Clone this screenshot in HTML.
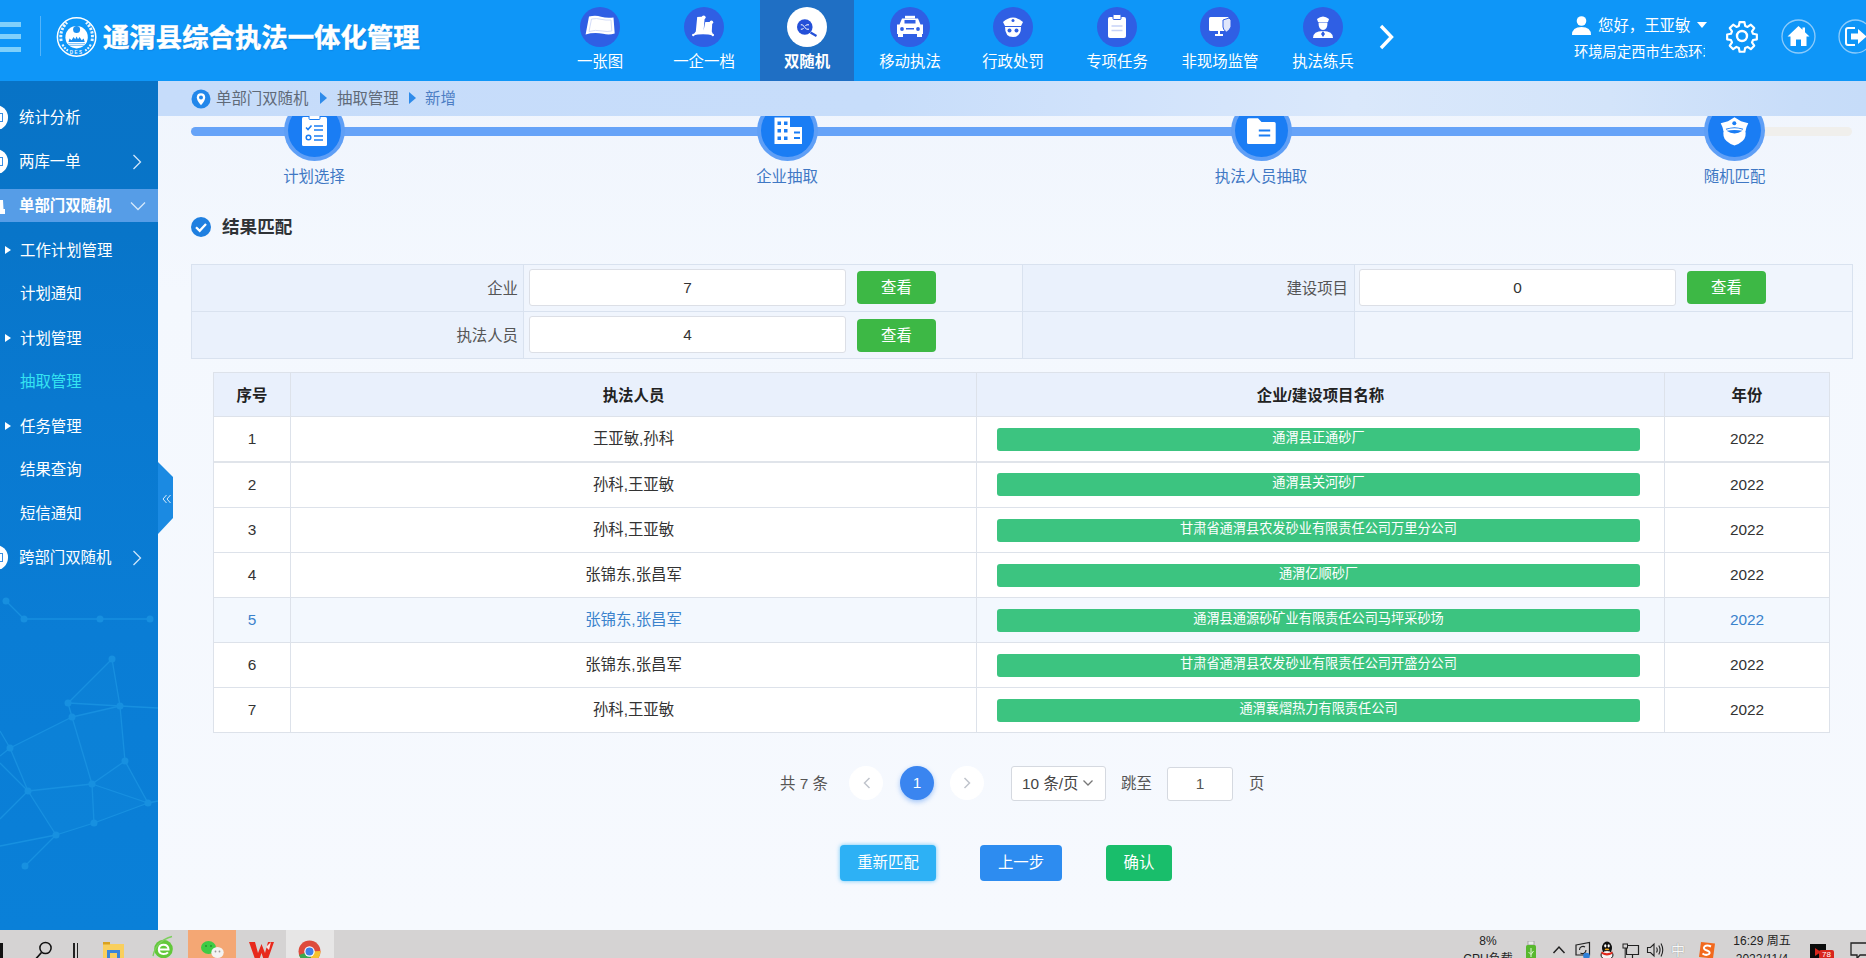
<!DOCTYPE html>
<html lang="zh-CN">
<head>
<meta charset="utf-8">
<title>通渭县综合执法一体化管理</title>
<style>
*{box-sizing:border-box;margin:0;padding:0}
html,body{width:1866px;height:958px;overflow:hidden;background:#f4f8fe}
body{font-family:"Liberation Sans","Noto Sans CJK SC",sans-serif;color:#333;position:relative;font-size:15.400px}
.abs{position:absolute}
/* header */
#hd{position:absolute;left:0;top:0;width:1866px;height:81px;background:#0e96f8;overflow:hidden}
#hd .bar{position:absolute;left:0;width:21px;height:5px;background:#7fd0fb}
#hd .vline{position:absolute;left:40px;top:16px;width:1px;height:40px;background:#53b4fa}
#title{position:absolute;left:103px;top:18px;-webkit-text-stroke:.5px #fff;font-size:26.400px;line-height:40px;font-weight:bold;color:#fff;white-space:nowrap;letter-spacing:0;text-shadow:1px 1px 1px rgba(0,60,140,.25)}
.nav{position:absolute;top:0;width:94px;height:81px;text-align:center;color:#fff}
.nav.on{background:#1f6fc4}
.nav .ic{position:absolute;left:27px;top:7px;width:40px;height:40px;border-radius:50%;background:#2f5fe4}
.nav.on .ic{background:#fff}
.nav .tx{position:absolute;left:-10px;right:-10px;top:51px;font-size:15.400px;line-height:22px;white-space:nowrap}
.nav.on .tx{font-weight:bold}
/* sidebar */
#sb{position:absolute;left:0;top:81px;width:158px;height:849px;background:linear-gradient(180deg,#0873c6 0%,#0875c9 18%,#0979d0 38%,#0a7dd5 65%,#0a80d8 100%);overflow:hidden;color:#fff}
#sb .it{position:absolute;left:0;width:158px;height:33px;line-height:33px;font-size:15.400px;white-space:nowrap}
#sb .it span{position:absolute;left:19px;top:0}
#sb .sub span{left:20px}
#sb .on{background:#569de7;font-weight:bold}
#sb .cur{color:#35e4f2}
#sb .dot{position:absolute;left:-17px;width:24.600px;height:24.600px;border-radius:50%;background:#fff;overflow:hidden}
#sb .dot i{position:absolute;left:16px;top:8px;width:4px;height:9px;border:1.300px solid #3a8fe4;border-left:none}
#sb .tri{position:absolute;left:5px;top:12px;width:0;height:0;border-left:6px solid #fff;border-top:4.5px solid transparent;border-bottom:4.5px solid transparent}
/* content */
#ct{position:absolute;left:158px;top:81px;width:1708px;height:849px;background:linear-gradient(180deg,#f0f5fd 0%,#f4f8fe 25%,#f6f9fe 100%);overflow:hidden}
#bc{position:absolute;left:158px;top:81px;width:1708px;height:35px;background:linear-gradient(90deg,#c6dcfa 0%,#c7ddfa 42%,#d0e2fb 55%,#dae8fb 70%,#d3e4fa 85%,#c8ddf9 96%,#c6dcf9 100%)}
#bc .t{position:absolute;top:8px;font-size:15.400px;line-height:20px;color:#5f6a78;white-space:nowrap}
.step{position:absolute;top:100px;width:61px;height:61px;border-radius:50%;background:#5f9ff6}
.step i{position:absolute;left:4px;top:4px;width:53px;height:53px;border-radius:50%;background:#1a7df4}
.stl{position:absolute;top:167px;width:160px;text-align:center;font-size:15.400px;line-height:20px;color:#3f78c4;white-space:nowrap}
/* form */
.fcell{position:absolute;border:1px solid #d9e2ef;background:#eaf1fc}
.flab{position:absolute;font-size:15.400px;line-height:20px;color:#555;text-align:right;white-space:nowrap}
.fin{position:absolute;height:37px;border:1px solid #dcdfe6;border-radius:3px;background:#fff;text-align:center;font-size:15.400px;line-height:35px;color:#333}
.fbtn{position:absolute;width:79px;height:33px;border-radius:4px;background:#3db845;color:#fff;text-align:center;font-size:15.400px;line-height:33px}
/* table */
#tb{position:absolute;left:213px;top:372px;width:1617px;height:361px;border:1px solid #dde2ea;background:#fff}
#tb .hd{position:absolute;left:0;top:0;width:1615px;height:44px;background:#e9f0fc;border-bottom:1px solid #dde2ea}
#tb .vl{position:absolute;top:0;width:1px;height:359px;background:#dde2ea}
#tb .hl{position:absolute;left:0;width:1615px;height:1px;background:#dde2ea}
#tb .c{position:absolute;text-align:center;font-size:15.400px;line-height:20px;color:#333;white-space:nowrap}
#tb .h{font-weight:bold;color:#222}
#tb .g{position:absolute;left:783px;width:643px;height:23px;border-radius:3px;background:#3cc480;color:#fff;font-size:13.200px;line-height:20px;text-align:center;white-space:nowrap}
#tb .hov{position:absolute;left:0;width:1615px;height:44px;background:#f3f8fe}
#tb .b{color:#3a82cc}
/* pager */
.pg{position:absolute;font-size:15.400px;line-height:20px;color:#555;white-space:nowrap}
.btn{position:absolute;top:845px;height:36px;border-radius:4px;color:#fff;font-size:15.400px;line-height:36px;text-align:center}
/* taskbar */
#tk{position:absolute;left:0;top:930px;width:1866px;height:28px;background:#d5d3d3;overflow:hidden}
</style>
</head>
<body>
<div id="ct"></div>
<div class="abs" style="left:191px;top:127px;width:1661px;height:9px;border-radius:5px;background:#f0efec"></div>
<div class="abs" style="left:191px;top:127px;width:1560px;height:9px;border-radius:5px 0 0 5px;background:#66a3f8"></div>
<div class="step" style="left:283.5px"><i></i><svg class="abs" style="left:0;top:0" width="61" height="61" viewBox="0 0 61 61"><rect x="18" y="17" width="25" height="29" rx="1.500" fill="#fff"/><rect x="25" y="14.500" width="11" height="5" rx="1" fill="#fff" stroke="#1a7df4" stroke-width="1"/><path d="M22 27.500 L24 29.500 L27.500 25.500" fill="none" stroke="#1a7df4" stroke-width="1.600"/><circle cx="24.500" cy="37.500" r="2.300" fill="none" stroke="#1a7df4" stroke-width="1.500"/><path d="M30 26 H39 M30 30 H39 M30 36 H39 M30 40 H39" stroke="#1a7df4" stroke-width="1.500"/></svg></div>
<div class="stl" style="left:234px">计划选择</div>
<div class="step" style="left:756.5px"><i></i><svg class="abs" style="left:0;top:0" width="61" height="61" viewBox="0 0 61 61"><path d="M17.500 17.500 H33 V27 H45 V44 H17.500 Z" fill="#fff"/><g fill="#1a7df4"><rect x="20.500" y="21.500" width="3.500" height="3.500"/><rect x="27" y="21.500" width="3.500" height="3.500"/><rect x="20.500" y="29" width="3.500" height="3.500"/><rect x="27" y="29" width="3.500" height="3.500"/><rect x="20.500" y="36.500" width="3.500" height="3.500"/><rect x="27" y="36.500" width="3.500" height="3.500"/><rect x="37" y="31.500" width="6" height="2"/><rect x="37" y="37" width="6" height="2"/></g></svg></div>
<div class="stl" style="left:707px">企业抽取</div>
<div class="step" style="left:1230.5px"><i></i><svg class="abs" style="left:0;top:0" width="61" height="61" viewBox="0 0 61 61"><path d="M16 19.700 Q16 18.200 17.500 18.200 H27 L30.500 22 H43.200 Q44.700 22 44.700 23.500 V42.500 Q44.700 44 43.200 44 H17.500 Q16 44 16 42.500 Z" fill="#fff"/><path d="M27.800 30.500 H39.200 M27.800 35.500 H39.200" stroke="#1a7df4" stroke-width="2.200"/></svg></div>
<div class="stl" style="left:1181px">执法人员抽取</div>
<div class="step" style="left:1704.0px"><i></i><svg class="abs" style="left:0;top:0" width="61" height="61" viewBox="0 0 61 61"><path d="M30.500 17.300 L37 21.300 L44.300 23.300 Q42 27.500 41.500 31 H19.500 Q19 27.500 16.700 23.300 L24 21.300 Z" fill="#fff"/><path d="M19.800 30 H41.200 Q43 37 38.500 41 Q34.500 44.500 30.500 45.600 Q26.500 44.500 22.500 41 Q18 37 19.800 30 Z" fill="#fff"/><path d="M22 29.300 Q30.500 26.300 39 29.300" fill="none" stroke="#1a7df4" stroke-width="1.100"/><path d="M22.500 30.800 Q30.500 29 38.500 30.800 Q30.500 36 22.500 30.800 Z" fill="#1a7df4"/><circle cx="30.300" cy="23.300" r="2" fill="#1a7df4"/></svg></div>
<div class="stl" style="left:1654.5px">随机匹配</div>
<svg class="abs" style="left:191px;top:217px" width="20" height="20" viewBox="0 0 20 20"><circle cx="10" cy="10" r="10" fill="#1f7fe0"/><path d="M5 10.200 L8.700 13.800 L15 7" fill="none" stroke="#fff" stroke-width="2.300"/></svg>
<div class="abs" style="left:222px;top:214px;font-size:17.600px;line-height:26px;font-weight:bold;color:#2f3236;white-space:nowrap">结果匹配</div>
<div class="fcell" style="left:191px;top:264px;width:333px;height:48px"></div>
<div class="fcell" style="left:523px;top:264px;width:500px;height:48px;background:#f0f5fd"></div>
<div class="fcell" style="left:1022px;top:264px;width:333px;height:48px"></div>
<div class="fcell" style="left:1354px;top:264px;width:499px;height:48px;background:#f0f5fd"></div>
<div class="fcell" style="left:191px;top:311px;width:333px;height:48px"></div>
<div class="fcell" style="left:523px;top:311px;width:500px;height:48px;background:#f0f5fd"></div>
<div class="fcell" style="left:1022px;top:311px;width:333px;height:48px"></div>
<div class="fcell" style="left:1354px;top:311px;width:499px;height:48px;background:#f0f5fd"></div>
<div class="flab" style="left:400px;top:279px;width:118px">企业</div>
<div class="flab" style="left:400px;top:326px;width:118px">执法人员</div>
<div class="flab" style="left:1230px;top:279px;width:118px">建设项目</div>
<div class="fin" style="left:529px;top:269px;width:317px">7</div><div class="fbtn" style="left:857px;top:271px">查看</div>
<div class="fin" style="left:529px;top:316px;width:317px">4</div><div class="fbtn" style="left:857px;top:319px">查看</div>
<div class="fin" style="left:1359px;top:269px;width:317px">0</div><div class="fbtn" style="left:1687px;top:271px">查看</div>
<div id="tb"><div class="hd"></div>
<div class="hov" style="top:225px;height:44px"></div>
<div class="hl" style="top:88px;height:2px;background:#e0e4ea"></div><div class="hl" style="top:134px"></div><div class="hl" style="top:179px"></div><div class="hl" style="top:224px"></div><div class="hl" style="top:269px"></div><div class="hl" style="top:314px"></div>
<div class="vl" style="left:76px"></div><div class="vl" style="left:762px"></div><div class="vl" style="left:1450px"></div>
<div class="c h" style="left:0px;top:13px;width:76px">序号</div><div class="c h" style="left:77px;top:13px;width:685px">执法人员</div><div class="c h" style="left:763px;top:13px;width:687px">企业/建设项目名称</div><div class="c h" style="left:1451px;top:13px;width:164px">年份</div>
<div class="c" style="left:0;top:56px;width:76px">1</div><div class="c" style="left:77px;top:56px;width:685px">王亚敏,孙科</div><div class="g" style="top:55px">通渭县正通砂厂</div><div class="c" style="left:1451px;top:56px;width:164px">2022</div>
<div class="c" style="left:0;top:102px;width:76px">2</div><div class="c" style="left:77px;top:102px;width:685px">孙科,王亚敏</div><div class="g" style="top:100px">通渭县关河砂厂</div><div class="c" style="left:1451px;top:102px;width:164px">2022</div>
<div class="c" style="left:0;top:147px;width:76px">3</div><div class="c" style="left:77px;top:147px;width:685px">孙科,王亚敏</div><div class="g" style="top:146px">甘肃省通渭县农发砂业有限责任公司万里分公司</div><div class="c" style="left:1451px;top:147px;width:164px">2022</div>
<div class="c" style="left:0;top:192px;width:76px">4</div><div class="c" style="left:77px;top:192px;width:685px">张锦东,张昌军</div><div class="g" style="top:191px">通渭亿顺砂厂</div><div class="c" style="left:1451px;top:192px;width:164px">2022</div>
<div class="c b" style="left:0;top:237px;width:76px">5</div><div class="c b" style="left:77px;top:237px;width:685px">张锦东,张昌军</div><div class="g" style="top:236px">通渭县通源砂矿业有限责任公司马坪采砂场</div><div class="c b" style="left:1451px;top:237px;width:164px">2022</div>
<div class="c" style="left:0;top:282px;width:76px">6</div><div class="c" style="left:77px;top:282px;width:685px">张锦东,张昌军</div><div class="g" style="top:281px">甘肃省通渭县农发砂业有限责任公司开盛分公司</div><div class="c" style="left:1451px;top:282px;width:164px">2022</div>
<div class="c" style="left:0;top:327px;width:76px">7</div><div class="c" style="left:77px;top:327px;width:685px">孙科,王亚敏</div><div class="g" style="top:326px">通渭襄熠热力有限责任公司</div><div class="c" style="left:1451px;top:327px;width:164px">2022</div>
</div>
<div class="pg" style="left:780px;top:774px">共 7 条</div>
<div class="abs" style="left:849px;top:766px;width:34px;height:34px;border-radius:50%;background:#fff"></div><svg class="abs" style="left:862px;top:776px" width="10" height="14" viewBox="0 0 10 14"><path d="M7.500 2 L2.500 7 L7.500 12" fill="none" stroke="#c0c4cc" stroke-width="1.500"/></svg>
<div class="abs" style="left:900px;top:766px;width:34px;height:34px;border-radius:50%;background:#3a85f0;box-shadow:0 2px 5px rgba(58,133,240,.45);color:#fff;text-align:center;font-size:15.400px;line-height:34px">1</div>
<div class="abs" style="left:950px;top:766px;width:34px;height:34px;border-radius:50%;background:#fff"></div><svg class="abs" style="left:962px;top:776px" width="10" height="14" viewBox="0 0 10 14"><path d="M2.500 2 L7.500 7 L2.500 12" fill="none" stroke="#c0c4cc" stroke-width="1.500"/></svg>
<div class="abs" style="left:1011px;top:766px;width:95px;height:35px;border:1px solid #d5d9e0;border-radius:3px;background:#fff"></div><div class="pg" style="left:1022px;top:774px;color:#444">10 条/页</div><svg class="abs" style="left:1082px;top:779px" width="12" height="8" viewBox="0 0 12 8"><path d="M1.500 1.500 L6 6 L10.500 1.500" fill="none" stroke="#777" stroke-width="1.300"/></svg>
<div class="pg" style="left:1121px;top:774px">跳至</div>
<div class="abs" style="left:1167px;top:767px;width:66px;height:34px;border:1px solid #d5d9e0;border-radius:3px;background:#fff;text-align:center;font-size:15.400px;line-height:32px;color:#555">1</div>
<div class="pg" style="left:1249px;top:774px">页</div>
<div class="btn" style="left:840px;width:96px;background:#2db1f5;box-shadow:0 0 4px rgba(45,177,245,.7)">重新匹配</div>
<div class="btn" style="left:980px;width:82px;background:#2d8cf0">上一步</div>
<div class="btn" style="left:1106px;width:66px;background:#19be6b">确认</div>
<svg class="abs" style="left:158px;top:462px" width="16" height="73" viewBox="0 0 16 73"><path d="M0 0 L15 15 V56 L0 72 Z" fill="#1b8ae2"/><path d="M8.500 33 L5 37 L8.500 41 M12.500 33 L9 37 L12.500 41" fill="none" stroke="#d6ebfb" stroke-width="1"/></svg>
<div id="sb">
<svg class="abs" style="left:0;top:420px" width="158" height="429" viewBox="0 0 158 429"><g stroke="#25a2ea" stroke-width="1.300" opacity=".5" fill="#25a2ea"><path d="M68 202 L112 158 L120 205 Z M72 216 L120 205 L125 260 L92 283 Z M92 283 L125 260 L148 302 Z M92 283 L148 302 L94 322 Z M10 247 L72 216 L92 283 L28 290 Z M28 290 L92 283 L94 322 L56 334 Z" stroke="none" opacity=".18"/><path d="M0 255 L10 247 M0 318 L28 290 M0 262 L28 290 M0 345 L56 334 M120 205 L158 207 M148 302 L158 300 M0 230 L10 247"/><line x1="6" y1="100" x2="24" y2="118"/><line x1="24" y1="118" x2="100" y2="118"/><line x1="100" y1="118" x2="150" y2="118"/><line x1="112" y1="158" x2="68" y2="202"/><line x1="68" y1="202" x2="72" y2="216"/><line x1="72" y1="216" x2="120" y2="205"/><line x1="112" y1="158" x2="120" y2="205"/><line x1="72" y1="216" x2="10" y2="247"/><line x1="72" y1="216" x2="92" y2="283"/><line x1="120" y1="205" x2="125" y2="260"/><line x1="125" y1="260" x2="92" y2="283"/><line x1="125" y1="260" x2="148" y2="302"/><line x1="92" y1="283" x2="148" y2="302"/><line x1="92" y1="283" x2="28" y2="290"/><line x1="10" y1="247" x2="28" y2="290"/><line x1="92" y1="283" x2="94" y2="322"/><line x1="94" y1="322" x2="56" y2="334"/><line x1="28" y1="290" x2="56" y2="334"/><line x1="94" y1="322" x2="148" y2="302"/><line x1="68" y1="202" x2="120" y2="205"/><line x1="56" y1="334" x2="25" y2="365"/><circle cx="6" cy="100" r="3.500" stroke="none"/><circle cx="24" cy="118" r="3.500" stroke="none"/><circle cx="100" cy="118" r="3.500" stroke="none"/><circle cx="150" cy="118" r="3.500" stroke="none"/><circle cx="112" cy="158" r="3.500" stroke="none"/><circle cx="68" cy="202" r="3.500" stroke="none"/><circle cx="72" cy="216" r="3.500" stroke="none"/><circle cx="120" cy="205" r="3.500" stroke="none"/><circle cx="10" cy="247" r="3.500" stroke="none"/><circle cx="125" cy="260" r="3.500" stroke="none"/><circle cx="92" cy="283" r="3.500" stroke="none"/><circle cx="28" cy="290" r="3.500" stroke="none"/><circle cx="148" cy="302" r="3.500" stroke="none"/><circle cx="94" cy="322" r="3.500" stroke="none"/><circle cx="56" cy="334" r="3.500" stroke="none"/><circle cx="25" cy="365" r="3.500" stroke="none"/></g></svg>
<div class="it" style="top:20px"><span>统计分析</span></div>
<div class="dot" style="top:24px"><i></i></div>
<div class="it" style="top:64px"><span>两库一单</span><svg class="abs" style="left:132px;top:9px" width="10" height="16" viewBox="0 0 10 16"><path d="M1.500 1 L8.500 8 L1.500 15" fill="none" stroke="#cfe6fa" stroke-width="1.300"/></svg></div>
<div class="dot" style="top:68px"><i></i></div>
<div class="it on" style="top:108px"><span>单部门双随机</span><svg class="abs" style="left:130px;top:12px" width="16" height="10" viewBox="0 0 16 10"><path d="M1 1.500 L8 8.500 L15 1.500" fill="none" stroke="#d5e8fb" stroke-width="1.300"/></svg></div>
<svg class="abs" style="left:0;top:118px" width="6" height="16" viewBox="0 0 6 16"><path d="M0 1 H3 L3.500 10 H5 V15 H0 Z" fill="#fff"/></svg>
<div class="it" style="top:460px"><span>跨部门双随机</span><svg class="abs" style="left:132px;top:9px" width="10" height="16" viewBox="0 0 10 16"><path d="M1.500 1 L8.500 8 L1.500 15" fill="none" stroke="#cfe6fa" stroke-width="1.300"/></svg></div>
<div class="dot" style="top:464px"><i></i></div>
<div class="it sub" style="top:153px"><i class="tri"></i><span>工作计划管理</span></div>
<div class="it sub" style="top:196px"><span>计划通知</span></div>
<div class="it sub" style="top:241px"><i class="tri"></i><span>计划管理</span></div>
<div class="it sub cur" style="top:284px"><span>抽取管理</span></div>
<div class="it sub" style="top:329px"><i class="tri"></i><span>任务管理</span></div>
<div class="it sub" style="top:372px"><span>结果查询</span></div>
<div class="it sub" style="top:416px"><span>短信通知</span></div>
</div>
<div id="hd">
<div class="bar" style="top:22px"></div><div class="bar" style="top:34px"></div><div class="bar" style="top:47px"></div>
<div class="vline"></div>
<svg class="abs" style="left:56px;top:16px" width="42" height="42" viewBox="0 0 42 42">
<circle cx="20.600" cy="21" r="19.200" fill="none" stroke="#fff" stroke-width="1.500"/>
<circle cx="20.600" cy="21.200" r="11.200" fill="#fff"/>
<circle cx="20.600" cy="13.600" r="3.500" fill="#1a8ef0"/>
<path d="M12.500 26 L13.500 22.500 L15.500 24.300 L17.600 21 L19.200 23.300 L20.600 20.600 L22 23.300 L23.600 21 L25.700 24.300 L27.700 22.500 L28.700 26 Z" fill="#1a8ef0"/>
<path d="M12.300 27.600 H28.900 M13 29.400 H28.200" stroke="#7cc0f7" stroke-width="1"/>
<path d="M5.200 25 Q3.200 14 11 6.500" fill="none" stroke="#e9f5ff" stroke-width="3" stroke-dasharray="2.400 1.300"/>
<path d="M36 25 Q38 14 30.200 6.500" fill="none" stroke="#e9f5ff" stroke-width="3" stroke-dasharray="2.400 1.300"/>
<path d="M6.500 28.500 Q8.500 32.500 12 34.500 M34.700 28.500 Q32.700 32.500 29.200 34.500" fill="none" stroke="#e9f5ff" stroke-width="2.200" stroke-dasharray="2 1.200"/>
<text x="20.600" y="37.600" text-anchor="middle" font-family="Liberation Sans,sans-serif" font-size="4.500" font-weight="bold" fill="#eaf5ff" letter-spacing="1.500">DES</text>
</svg>
<div id="title">通渭县综合执法一体化管理</div>
<div class="nav" style="left:553px"><div class="ic"><svg width="40" height="40" viewBox="0 0 40 40"><path d="M9 9.500 Q16 8 21 9.800 Q27 11.500 33.500 10.500 L34.700 26.500 Q29 28.500 23 26.800 Q14 25 5.600 27.500 Z" fill="#fff"/><path d="M11.500 12 Q17 11 21 12.300 Q26 13.500 31 13 L31.800 24 Q27 25 22.500 24 Q15 22.500 9 24.500 Z" fill="none" stroke="#cfd9f7" stroke-width=".9"/></svg></div><div class="tx">一张图</div></div>
<div class="nav" style="left:657px"><div class="ic"><svg width="40" height="40" viewBox="0 0 40 40"><path d="M8.600 28.600 L11.800 24.500 L13.200 10 L20.800 9.500 L19.600 23.500 L21.300 15 L28.300 15 L27.800 24.500 L29.500 28.600 Q19 25.800 8.600 28.600 Z" fill="#fff"/><circle cx="19.700" cy="10.300" r="1.900" fill="#fff"/><circle cx="27.400" cy="15.300" r="1.800" fill="#fff"/><circle cx="9.300" cy="28" r="1.200" fill="#fff"/><circle cx="28.800" cy="28" r="1.200" fill="#fff"/></svg></div><div class="tx">一企一档</div></div>
<div class="nav on" style="left:760px"><div class="ic"><svg width="40" height="40" viewBox="0 0 40 40"><circle cx="17.800" cy="20" r="7.800" fill="#2450d8"/><path d="M23.500 25.500 L29.500 29" stroke="#2450d8" stroke-width="2.200"/><path d="M13.800 17.800 H15.500 L19.500 22.200 H22 M13.800 22.200 H15.500 L16.500 21 M18.500 19 L19.500 17.800 H22" fill="none" stroke="#fff" stroke-width="1"/></svg></div><div class="tx">双随机</div></div>
<div class="nav" style="left:863px"><div class="ic"><svg width="40" height="40" viewBox="0 0 40 40"><path d="M12 11.500 H28 L30.500 17.500 H9.500 Z M7 17.500 H33 V27 H7 Z" fill="#fff"/><rect x="15" y="8.800" width="10" height="2.700" fill="#fff"/><rect x="14.500" y="13" width="11" height="3.500" fill="#2f5fe4"/><circle cx="12" cy="22" r="1.900" fill="#2f5fe4"/><circle cx="28" cy="22" r="1.900" fill="#2f5fe4"/><rect x="16" y="21" width="8" height="1.500" fill="#2f5fe4"/><rect x="8" y="27" width="5" height="3" fill="#fff"/><rect x="27" y="27" width="5" height="3" fill="#fff"/></svg></div><div class="tx">移动执法</div></div>
<div class="nav" style="left:966px"><div class="ic"><svg width="40" height="40" viewBox="0 0 40 40"><path d="M10 15 Q20 6 30 15 L28 19 H12 Z" fill="#fff"/><path d="M12 20 H28 Q28 30 20 30 Q12 30 12 20 Z" fill="#fff"/><circle cx="16.500" cy="23.500" r="2" fill="#2f5fe4"/><circle cx="23.500" cy="23.500" r="2" fill="#2f5fe4"/><circle cx="20" cy="13.500" r="1.500" fill="#2f5fe4"/></svg></div><div class="tx">行政处罚</div></div>
<div class="nav" style="left:1070px"><div class="ic"><svg width="40" height="40" viewBox="0 0 40 40"><rect x="11" y="10" width="18" height="21" rx="2" fill="#fff"/><rect x="16" y="7.500" width="8" height="5" rx="1" fill="#fff" stroke="#2f5fe4" stroke-width="1"/><path d="M14.500 19 H25.500 M14.500 23.500 H25.500" stroke="#c6d2f7" stroke-width="1.500"/></svg></div><div class="tx">专项任务</div></div>
<div class="nav" style="left:1173px"><div class="ic"><svg width="40" height="40" viewBox="0 0 40 40"><rect x="9" y="10" width="20" height="14" rx="1.500" fill="#fff"/><path d="M15 28 H23 M19 24 V28" stroke="#fff" stroke-width="2"/><path d="M23 13 L29 11 L31 13 V20 Q29 24 26.500 25 Q23 23 23 20 Z" fill="#dfe6fb" stroke="#2f5fe4" stroke-width="1"/></svg></div><div class="tx">非现场监管</div></div>
<div class="nav" style="left:1276px"><div class="ic"><svg width="40" height="40" viewBox="0 0 40 40"><path d="M14 12 Q20 7 26 12 L25 15 H15 Z" fill="#fff"/><path d="M15.500 15.500 H24.500 Q24.500 23 20 23 Q15.500 23 15.500 15.500 Z" fill="#fff"/><path d="M10 31 Q10 24 20 24 Q30 24 30 31 Z" fill="#fff"/><path d="M20 24 L18 27 L20 30 L22 27 Z" fill="#2f5fe4"/></svg></div><div class="tx">执法练兵</div></div>

<svg class="abs" style="left:1378px;top:24px" width="18" height="26" viewBox="0 0 18 26"><path d="M3 2 L13.500 13 L3 24" fill="none" stroke="#fff" stroke-width="3.400"/></svg>
<svg class="abs" style="left:1571px;top:15px" width="21" height="21" viewBox="0 0 21 21"><circle cx="10.500" cy="6" r="4.800" fill="#fff"/><path d="M1 20 Q1 12 10.500 12 Q20 12 20 20 Z" fill="#fff"/></svg>
<div class="abs" style="left:1598px;top:15px;font-size:15.400px;line-height:22px;color:#fff;white-space:nowrap">您好，王亚敏</div>
<div class="abs" style="left:1696.500px;top:22px;width:0;height:0;border-top:6px solid #fff;border-left:5.500px solid transparent;border-right:5.500px solid transparent"></div>
<div class="abs" style="left:1574px;top:40.500px;width:131px;overflow:hidden;font-size:14.300px;line-height:22px;color:#fff;white-space:nowrap">环境局定西市生态环境局</div>
<svg class="abs" style="left:1723.500px;top:17.700px" width="36" height="36" viewBox="0 0 36 36"><g fill="none" stroke="#fff" stroke-width="2.400" stroke-linejoin="round"><path d="M15.300 2.500h5.400l.8 4.300 2.700 1.100 3.600-2.500 3.800 3.800-2.500 3.600 1.100 2.700 4.300.8v5.400l-4.300.8-1.100 2.700 2.500 3.600-3.800 3.800-3.600-2.500-2.700 1.100-.8 4.300h-5.400l-.8-4.300-2.700-1.100-3.600 2.500-3.800-3.800 2.500-3.600-1.100-2.700-4.300-.8v-5.400l4.300-.8 1.100-2.700-2.500-3.600 3.800-3.800 3.600 2.500 2.700-1.100z" transform="translate(1.800 1.800) scale(0.900)"/><circle cx="18" cy="18" r="5"/></g></svg>
<svg class="abs" style="left:1781px;top:19px" width="36" height="36" viewBox="0 0 36 36"><circle cx="17.500" cy="17.500" r="16.500" fill="none" stroke="#8ccbfb" stroke-width="1.300"/><path d="M17.500 7 L6.500 17.500 H9.500 V27 H15 V20.500 H20 V27 H25.500 V17.500 H28.500 L24 13.200 V8.500 H21.500 V10.800 Z" fill="#fff"/></svg>
<svg class="abs" style="left:1838px;top:19px" width="36" height="36" viewBox="0 0 36 36"><circle cx="17.500" cy="17.500" r="16.500" fill="none" stroke="#8ccbfb" stroke-width="1.300"/><path d="M17 9 H10 Q8 9 8 11 V24 Q8 26 10 26 H17" fill="none" stroke="#fff" stroke-width="2"/><path d="M13 14.500 H20 V10 L28.500 17.500 L20 25 V20.500 H13 Z" fill="#fff"/></svg>
</div>
<div id="bc">
<svg class="abs" style="left:33px;top:8px" width="20" height="20" viewBox="0 0 20 20"><circle cx="10" cy="10" r="9.500" fill="#2287ea"/><path d="M10 4.200 Q5.800 4.200 5.800 8.500 Q5.800 11.500 10 16.200 Q14.200 11.500 14.200 8.500 Q14.200 4.200 10 4.200 Z" fill="#fff"/><circle cx="10" cy="8.500" r="2" fill="#2287ea"/></svg>
<div class="t" style="left:58px">单部门双随机</div>
<div class="abs" style="left:162px;top:11px;width:0;height:0;border-left:7px solid #2e8bea;border-top:6px solid transparent;border-bottom:6px solid transparent"></div>
<div class="t" style="left:179px">抽取管理</div>
<div class="abs" style="left:251px;top:11px;width:0;height:0;border-left:7px solid #2e8bea;border-top:6px solid transparent;border-bottom:6px solid transparent"></div>
<div class="t" style="left:267px;color:#4c7ec4">新增</div>
</div>
<div id="tk">
<div class="abs" style="left:188px;top:0;width:48px;height:28px;background:#f4a774"></div>
<div class="abs" style="left:286px;top:0;width:48px;height:28px;background:#e7e6e6"></div>
<div class="abs" style="left:0;top:13px;width:3px;height:15px;background:#111"></div>
<svg class="abs" style="left:30px;top:10px" width="26" height="20" viewBox="0 0 26 20"><circle cx="15.500" cy="8" r="5.600" fill="none" stroke="#111" stroke-width="1.500"/><path d="M11.500 12.500 L4 21" stroke="#111" stroke-width="1.700"/></svg>
<div class="abs" style="left:73px;top:13px;width:1.500px;height:15px;background:#222"></div><div class="abs" style="left:76.500px;top:13px;width:1.500px;height:15px;background:#222"></div>
<svg class="abs" style="left:102px;top:11px" width="24" height="18" viewBox="0 0 24 18"><path d="M1 1 H8 V3 H22 V18 H1 Z" fill="#f9cf5d"/><rect x="1" y="1" width="7" height="2.500" fill="#d9a11f"/><rect x="5" y="9" width="13" height="9" fill="#3a86d9"/><rect x="8" y="12" width="7" height="6" fill="#f9cf5d"/></svg>
<svg class="abs" style="left:150px;top:2px" width="28" height="26" viewBox="0 0 28 26"><circle cx="13.500" cy="17" r="9.300" fill="#62c83a"/><path d="M8.800 17.500 H18.500 Q18.300 12.800 13.500 12.800 Q9 12.800 8.800 17.500 Q9 22 13.500 22 Q16.500 22 18 20.300" fill="none" stroke="#fff" stroke-width="2"/><path d="M3 24 Q6 9 22 4.500" fill="none" stroke="#7ccf5c" stroke-width="1.300"/></svg>
<svg class="abs" style="left:199px;top:9px" width="30" height="20" viewBox="0 0 30 20"><ellipse cx="9.500" cy="8.500" rx="7.500" ry="6.500" fill="#3ecb45"/><ellipse cx="18.500" cy="13.500" rx="6.200" ry="5.500" fill="#f3f3f3"/><circle cx="7" cy="7" r="1" fill="#2a8f31"/><circle cx="12" cy="7" r="1" fill="#2a8f31"/><circle cx="16.500" cy="12.500" r=".9" fill="#999"/><circle cx="20.500" cy="12.500" r=".9" fill="#999"/></svg>
<svg class="abs" style="left:248px;top:11px" width="28" height="18" viewBox="0 0 28 18"><path d="M1 1 H7 L10 12 L13.500 3 L17 12 L20 1 H26 L20 18 H15.500 L13.500 12 L11.500 18 H7 Z" fill="#e8291c"/><path d="M18 6 L23 1 L21 9 Z" fill="#fff" opacity=".85"/></svg>
<svg class="abs" style="left:297px;top:7px" width="26" height="24" viewBox="0 0 26 20"><circle cx="12.500" cy="12.500" r="11" fill="#de4b3c"/><path d="M12.500 12.500 L2 16 A11 11 0 0 0 15 23.200 Z" fill="#39a853"/><path d="M12.500 12.500 L23.500 12 A11 11 0 0 1 15 23.200 Z" fill="#f6c22d"/><circle cx="12.500" cy="12.500" r="5.200" fill="#fff"/><circle cx="12.500" cy="12.500" r="4" fill="#3f7fe8"/></svg>
<div class="abs" style="left:1460px;top:4px;width:56px;text-align:center;font-size:12px;line-height:14px;color:#222">8%</div>
<div class="abs" style="left:1454px;top:21.500px;width:68px;text-align:center;font-size:12px;line-height:14px;color:#222;white-space:nowrap">CPU负载</div>
<svg class="abs" style="left:1525px;top:11px" width="12" height="18" viewBox="0 0 12 18"><rect x="3" y="0" width="6" height="4" fill="#e9e9e9" stroke="#888" stroke-width=".6"/><rect x="1" y="4" width="10" height="14" rx="1.500" fill="#58b82e"/><path d="M6 7 V16 M3.500 11 L6 13.500 L8.500 10" fill="none" stroke="#dff5d5" stroke-width="1"/></svg>
<svg class="abs" style="left:1552px;top:15px" width="14" height="9" viewBox="0 0 14 9"><path d="M1.500 8 L7 2 L12.500 8" fill="none" stroke="#222" stroke-width="1.500"/></svg>
<svg class="abs" style="left:1574px;top:11px" width="20" height="18" viewBox="0 0 20 18"><path d="M2 4 L15.500 1.500 V14 L2 14 Z" fill="none" stroke="#222" stroke-width="1.200"/><path d="M5.500 9 A3.500 3.500 0 0 1 11 6 M12 9 A3.500 3.500 0 0 1 6.500 12" fill="none" stroke="#222" stroke-width="1.100"/><circle cx="12.500" cy="15" r="3.300" fill="#2f7fd8"/></svg>
<svg class="abs" style="left:1599px;top:10px" width="16" height="19" viewBox="0 0 16 19"><ellipse cx="8" cy="8" rx="5" ry="6.500" fill="#111"/><ellipse cx="8" cy="15" rx="6" ry="4.500" fill="#f3f3f3" stroke="#111" stroke-width="1"/><path d="M2.500 11.500 Q8 15 13.500 11.500 V13.800 Q8 17 2.500 13.800 Z" fill="#e0281d"/><ellipse cx="6.300" cy="5.800" rx="1.100" ry="1.600" fill="#fff"/><ellipse cx="9.700" cy="5.800" rx="1.100" ry="1.600" fill="#fff"/><ellipse cx="8" cy="9.300" rx="2.400" ry=".9" fill="#f2a820"/></svg>
<svg class="abs" style="left:1622px;top:13px" width="18" height="16" viewBox="0 0 18 16"><path d="M4.500 2.500 H16.500 V11.500 H4.500 Z M10.500 11.500 V15 M6 15.500 H15" fill="none" stroke="#222" stroke-width="1.200"/><rect x="1" y="1" width="4.500" height="4" fill="#d5d3d3" stroke="#222" stroke-width="1"/><path d="M3.200 5 V15" stroke="#222" stroke-width="1"/></svg>
<svg class="abs" style="left:1646px;top:12px" width="19" height="16" viewBox="0 0 19 16"><path d="M1.500 5.500 H4.500 L8 2 V14 L4.500 10.500 H1.500 Z" fill="none" stroke="#222" stroke-width="1.100"/><path d="M10.500 5.500 Q12 8 10.500 10.500 M12.800 3.500 Q15.300 8 12.800 12.500 M15 1.500 Q18.500 8 15 14.500" fill="none" stroke="#222" stroke-width="1.100"/></svg>
<div class="abs" style="left:1671px;top:12px;font-size:14px;line-height:16px;color:#f8f8f8;text-shadow:0 0 1px #999,0 0 1px #999">中</div>
<svg class="abs" style="left:1698px;top:11px" width="18" height="18" viewBox="0 0 18 18"><path d="M3 1 L17 2.500 L15 17.500 L1 16 Z" fill="#f2691d"/><path d="M13 5.500 Q9 3.500 6.500 5.500 Q4.500 8 9 9.500 Q13 11 11 13 Q8 15 4.500 12.500" fill="none" stroke="#fff" stroke-width="2"/></svg>
<div class="abs" style="left:1726px;top:4px;width:72px;text-align:center;font-size:12px;line-height:14px;color:#222;white-space:nowrap">16:29 周五</div>
<div class="abs" style="left:1726px;top:21.500px;width:72px;text-align:center;font-size:12px;line-height:14px;color:#222;white-space:nowrap">2022/11/4</div>
<div class="abs" style="left:1810px;top:14px;width:16px;height:14px;background:#0b0b0b"></div>
<div class="abs" style="left:1815px;top:18px;width:0;height:0;border-left:6px solid #d8261c;border-top:4px solid transparent;border-bottom:4px solid transparent"></div>
<div class="abs" style="left:1819px;top:20px;width:15px;height:10px;border-radius:2px;background:#d9261d;color:#fff;font-size:8px;line-height:10px;text-align:center">78</div>
<svg class="abs" style="left:1850px;top:12px" width="18" height="18" viewBox="0 0 18 18"><path d="M1 1 H17 V13 H10 L7 16.500 V13 H1 Z" fill="none" stroke="#222" stroke-width="1.300"/></svg>
</div>
</body>
</html>
